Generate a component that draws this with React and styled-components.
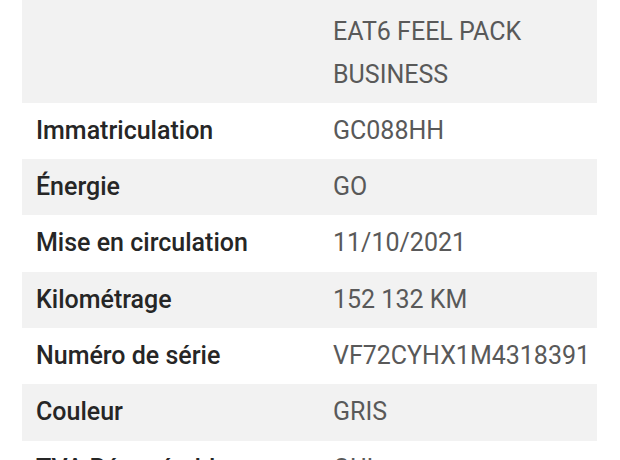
import React from "react";
import styled, { createGlobalStyle } from "styled-components";

const Global = createGlobalStyle`
  html, body {
    margin: 0;
    padding: 0;
    background: #ffffff;
    overflow: hidden;
  }
  body {
    font-family: Roboto, "Liberation Sans", sans-serif;
  }
`;

const rows = [
  { label: "Finition", value: ["1.5 BLUEHDI 130 S&S", "EAT6 FEEL PACK", "BUSINESS"] },
  { label: "Immatriculation", value: ["GC088HH"] },
  { label: "Énergie", value: ["GO"] },
  { label: "Mise en circulation", value: ["11/10/2021"] },
  { label: "Kilométrage", value: ["152 132 KM"] },
  { label: "Numéro de série", value: ["VF72CYHX1M4318391"] },
  { label: "Couleur", value: ["GRIS"] },
  { label: "TVA Récupérable", value: ["OUI"] },
];

export default function App() {
  return (
    <Page>
      <Global />
      <Table>
        {rows.map((r, i) => (
          <Row key={r.label} $shaded={i % 2 === 0}>
            <Label>{r.label}</Label>
            <Value>
              {r.value.map((line) => (
                <div key={line}>{line}</div>
              ))}
            </Value>
          </Row>
        ))}
      </Table>
    </Page>
  );
}

const Page = styled.div`
  width: 620px;
  height: 460px;
  overflow: hidden;
  padding: 0 23px 0 22px;
  box-sizing: border-box;
`;

const Table = styled.div`
  display: flex;
  flex-direction: column;
  margin-top: -38px;
`;

const Row = styled.div`
  display: grid;
  grid-template-columns: 297px 1fr;
  align-items: start;
  padding: 7px 0 7px 14px;
  line-height: 42.3px;
  font-size: 25px;
  background: ${(p) => (p.$shaded ? "#f2f2f2" : "#ffffff")};
`;

const Label = styled.div`
  font-weight: 500;
  color: #262626;
  white-space: nowrap;
`;

const Value = styled.div`
  font-weight: 400;
  color: #595959;
  white-space: nowrap;
`;
